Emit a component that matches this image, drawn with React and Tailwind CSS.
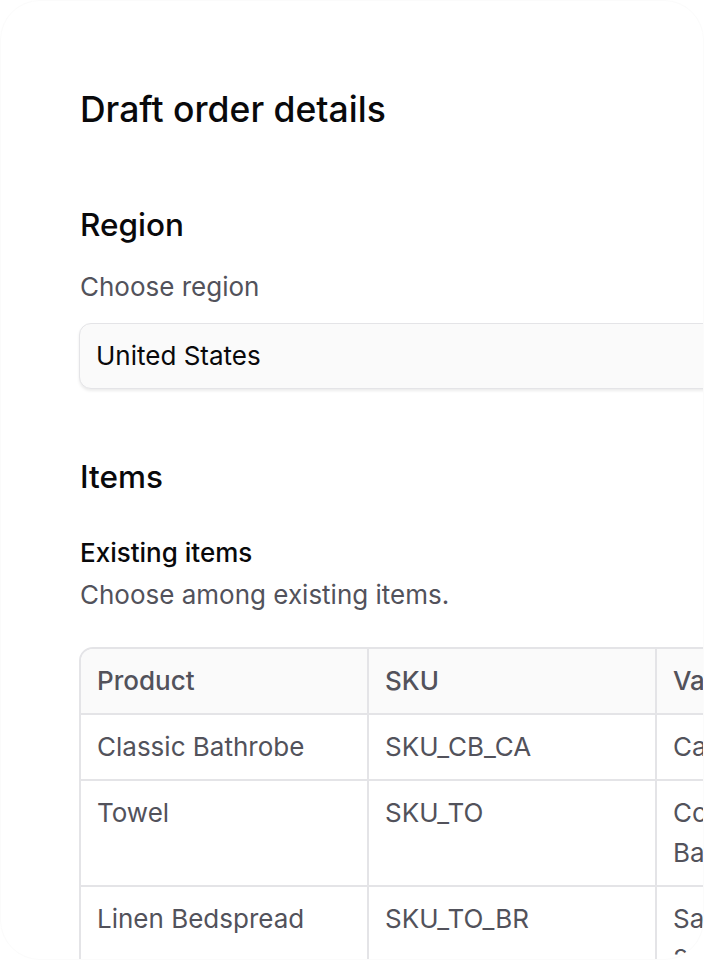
const rows = [
  { product: "Classic Bathrobe", sku: "SKU_CB_CA", variant: ["Canvas"] },
  { product: "Towel", sku: "SKU_TO", variant: ["Cotton /", "Bath towel"] },
  { product: "Linen Bedspread", sku: "SKU_TO_BR", variant: ["Sand / Queen", "2 pieces"] },
];

const App = () => {
  return (
    <div className="h-[960px] w-[704px] overflow-hidden bg-white font-['Inter',sans-serif]">
      <div className="h-full w-full overflow-hidden rounded-[40px] border border-[#fbfbfb] bg-white">
        <div className="pl-[79px] pt-[81px]">
          <h1 className="text-[35.5px] font-medium leading-[56px] text-[#09090b]">Draft order details</h1>

          {/* Region */}
          <h2 className="mt-[63px] text-[31.5px] font-medium leading-[48px] text-[#09090b]">Region</h2>
          <p className="mt-[18px] text-[26px] leading-[40px] text-[#52525b]">Choose region</p>
          <div className="ml-[-1px] mt-[16px] flex h-[66px] w-[700px] items-center rounded-[12px] border border-[#e4e4e7] bg-[#fafafa] px-[16px] shadow-[0_2px_3px_rgba(0,0,0,0.08)]">
            <span className="text-[26px] leading-[40px] text-[#09090b]">United States</span>
          </div>

          {/* Items */}
          <h2 className="mt-[64px] text-[31.5px] font-medium leading-[48px] text-[#09090b]">Items</h2>
          <p className="mt-[32px] text-[26px] font-medium leading-[40px] text-[#09090b]">Existing items</p>
          <p className="mt-[2px] text-[26px] leading-[40px] text-[#52525b]">Choose among existing items.</p>

          <div className="ml-[-1px] mt-[32px] w-[900px] overflow-hidden rounded-[14px] border-2 border-[#e4e4e7]">
            <div className="grid grid-cols-[286px_288px_1fr] bg-[#fafafa]">
              <div className="px-[16px] py-[12px] text-[26px] font-medium leading-[40px] text-[#52525b]">Product</div>
              <div className="border-l-2 border-[#e4e4e7] px-[16px] py-[12px] text-[26px] font-medium leading-[40px] text-[#52525b]">SKU</div>
              <div className="border-l-2 border-[#e4e4e7] px-[16px] py-[12px] text-[26px] font-medium leading-[40px] text-[#52525b]">Variant</div>
            </div>
            {rows.map((r) => (
              <div key={r.sku} className="grid grid-cols-[286px_288px_1fr] border-t-2 border-[#e4e4e7]">
                <div className="px-[16px] py-[12px] text-[26px] leading-[40px] text-[#52525b]">{r.product}</div>
                <div className="border-l-2 border-[#e4e4e7] px-[16px] py-[12px] text-[26px] leading-[40px] text-[#52525b]">{r.sku}</div>
                <div className="border-l-2 border-[#e4e4e7] px-[16px] py-[12px] text-[26px] leading-[40px] text-[#52525b]">
                  {r.variant.map((v) => (
                    <div key={v}>{v}</div>
                  ))}
                </div>
              </div>
            ))}
          </div>
        </div>
      </div>
    </div>
  );
};

export default App;
